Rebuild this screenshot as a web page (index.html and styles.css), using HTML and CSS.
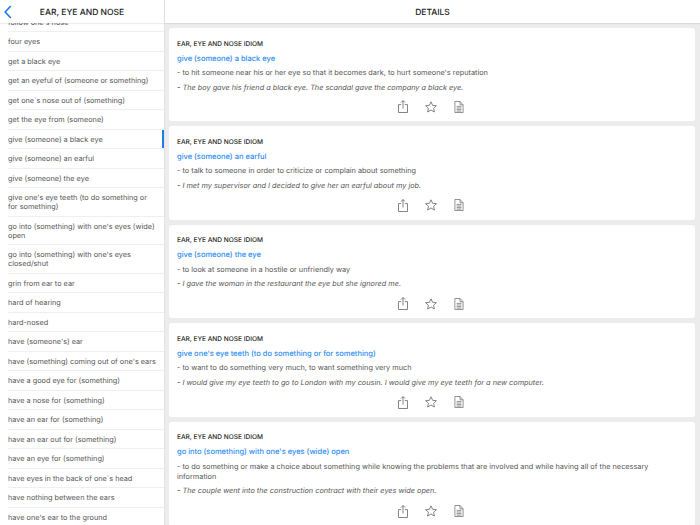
FILE: index.html
```html
<!DOCTYPE html>
<html lang="en">
<head>
<meta charset="utf-8">
<title>Ear, Eye and Nose</title>
<link rel="stylesheet" href="styles.css">
</head>
<body>
<svg class="defs" width="0" height="0">
<defs>
<symbol id="share" viewBox="0 0 10 13"><path d="M3.2 4.6H.5V12.5H9.5V4.6H6.8M5 8.6V.6M3 2.5L5 .5 7 2.5" fill="none" stroke="currentColor" stroke-width=".8"/></symbol>
<symbol id="star" viewBox="0 0 12 12"><path d="M6 .8L7.6 4.3 11.4 4.7 8.6 7.2 9.4 11 6 9 2.6 11 3.4 7.2 .6 4.7 4.4 4.3Z" fill="none" stroke="currentColor" stroke-width=".8" stroke-linejoin="round"/></symbol>
<symbol id="doc" viewBox="0 0 10 12"><path d="M.9 .5H6L9.1 3.8V11.5H.9ZM6 .5V3.8H9.1M2.6 5.4H7.4M2.6 7H7.4M2.6 8.6H7.4M2.6 10.1H7.4" fill="none" stroke="currentColor" stroke-width=".7"/></symbol>
</defs>
</svg>
<div class="app">
  <aside class="sidebar">
    <header class="bar bar-left">
      <svg class="back" viewBox="0 0 8 14" width="8" height="14"><path d="M6.8 1L1.2 7l5.6 6" fill="none" stroke="currentColor" stroke-width="1.7"/></svg>
      <span class="bar-title">EAR, EYE AND NOSE</span>
    </header>
    <ul class="list">
      <li class="row">follow one's nose</li>
      <li class="row">four eyes</li>
      <li class="row">get a black eye</li>
      <li class="row">get an eyeful of (someone or something)</li>
      <li class="row">get one`s nose out of (something)</li>
      <li class="row">get the eye from (someone)</li>
      <li class="row active">give (someone) a black eye</li>
      <li class="row">give (someone) an earful</li>
      <li class="row">give (someone) the eye</li>
      <li class="row">give one's eye teeth (to do something or for something)</li>
      <li class="row">go into (something) with one's eyes (wide) open</li>
      <li class="row">go into (something) with one's eyes closed/shut</li>
      <li class="row">grin from ear to ear</li>
      <li class="row">hard of hearing</li>
      <li class="row">hard-nosed</li>
      <li class="row">have (someone's) ear</li>
      <li class="row">have (something) coming out of one's ears</li>
      <li class="row">have a good eye for (something)</li>
      <li class="row">have a nose for (something)</li>
      <li class="row">have an ear for (something)</li>
      <li class="row">have an ear out for (something)</li>
      <li class="row">have an eye for (something)</li>
      <li class="row">have eyes in the back of one`s head</li>
      <li class="row">have nothing between the ears</li>
      <li class="row">have one's ear to the ground</li>
    </ul>
  </aside>
  <main class="details">
    <header class="bar"><span class="bar-title">DETAILS</span></header>
    <div class="cards">
      <article class="card">
        <h2 class="cat">EAR, EYE AND NOSE IDIOM</h2>
        <h3 class="idiom">give (someone) a black eye</h3>
        <p class="def">- to hit someone near his or her eye so that it becomes dark, to hurt someone's reputation</p>
        <p class="ex">- The boy gave his friend a black eye. The scandal gave the company a black eye.</p>
        <div class="actions"><svg class="i-share"><use href="#share"/></svg><svg class="i-star"><use href="#star"/></svg><svg class="i-doc"><use href="#doc"/></svg></div>
      </article>
      <article class="card">
        <h2 class="cat">EAR, EYE AND NOSE IDIOM</h2>
        <h3 class="idiom">give (someone) an earful</h3>
        <p class="def">- to talk to someone in order to criticize or complain about something</p>
        <p class="ex">- I met my supervisor and I decided to give her an earful about my job.</p>
        <div class="actions"><svg class="i-share"><use href="#share"/></svg><svg class="i-star"><use href="#star"/></svg><svg class="i-doc"><use href="#doc"/></svg></div>
      </article>
      <article class="card">
        <h2 class="cat">EAR, EYE AND NOSE IDIOM</h2>
        <h3 class="idiom">give (someone) the eye</h3>
        <p class="def">- to look at someone in a hostile or unfriendly way</p>
        <p class="ex">- I gave the woman in the restaurant the eye but she ignored me.</p>
        <div class="actions"><svg class="i-share"><use href="#share"/></svg><svg class="i-star"><use href="#star"/></svg><svg class="i-doc"><use href="#doc"/></svg></div>
      </article>
      <article class="card">
        <h2 class="cat">EAR, EYE AND NOSE IDIOM</h2>
        <h3 class="idiom">give one's eye teeth (to do something or for something)</h3>
        <p class="def">- to want to do something very much, to want something very much</p>
        <p class="ex">- I would give my eye teeth to go to London with my cousin. I would give my eye teeth for a new computer.</p>
        <div class="actions"><svg class="i-share"><use href="#share"/></svg><svg class="i-star"><use href="#star"/></svg><svg class="i-doc"><use href="#doc"/></svg></div>
      </article>
      <article class="card">
        <h2 class="cat">EAR, EYE AND NOSE IDIOM</h2>
        <h3 class="idiom">go into (something) with one's eyes (wide) open</h3>
        <p class="def">- to do something or make a choice about something while knowing the problems that are involved and while having all of the necessary information</p>
        <p class="ex">- The couple went into the construction contract with their eyes wide open.</p>
        <div class="actions"><svg class="i-share"><use href="#share"/></svg><svg class="i-star"><use href="#star"/></svg><svg class="i-doc"><use href="#doc"/></svg></div>
      </article>
    </div>
  </main>
</div>
</body>
</html>
```
FILE: styles.css
```css
* { box-sizing: border-box; }
html, body { margin: 0; height: 100%; }
body { font-family: Inter, "Liberation Sans", sans-serif; color: #333; background: #fff; overflow: hidden; text-rendering: geometricPrecision; }
.defs { position: absolute; }
.app { display: flex; width: 700px; height: 525px; overflow: hidden; }
.sidebar { width: 165px; flex: none; border-right: 1px solid #e2e2e2; display: flex; flex-direction: column; overflow: hidden; background: #fff; }
.details { flex: 1; display: flex; flex-direction: column; background: #ececec; min-width: 0; }
.bar { height: 23px; flex: none; background: #fff; display: flex; align-items: center; justify-content: center; padding-top: 2px; box-shadow: 0 1px 1px rgba(0, 0, 0, .07); position: relative; z-index: 1; }
.bar-title { font-size: 8.5px; line-height: 10px; font-weight: 500; color: #222; }
.back { position: absolute; left: 4px; top: 5px; color: #1b7df0; }
.list { list-style: none; margin: -10.25px 0 0; padding: 0 0 0 8px; }
.row { font-size: 7.3px; line-height: 9px; color: #555; padding: 4.75px 6px 4.75px 0; border-bottom: 1px solid #efefef; position: relative; }
.row.active::after { content: ""; position: absolute; right: 0; top: 0; bottom: 0; width: 2px; background: #1b7df0; }
.cards { padding: 5px 5px 0 4px; display: flex; flex-direction: column; gap: 5px; }
.card { background: #fff; border-radius: 3px; padding: 11.5px 8px 0; height: 93.4px; flex: none; display: flex; flex-direction: column; }
.card:last-child { height: 104px; }
.cat { margin: 0; font-size: 6.55px; line-height: 9px; font-weight: 500; color: #222; }
.idiom { margin: 4px 0 0; font-size: 7.5px; line-height: 11px; font-weight: 500; color: #2b8cf2; }
.def { margin: 4.5px 0 0; font-size: 7.33px; line-height: 10px; color: #555; }
.ex { margin: 4.5px 0 0; font-size: 7.32px; line-height: 10px; color: #555; font-style: italic; }
.actions { margin-top: auto; margin-bottom: 8px; margin-right: 3px; display: flex; justify-content: center; align-items: center; gap: 17px; color: #666; }
.i-share { width: 10px; height: 13px; }
.i-star { width: 12px; height: 12px; }
.i-doc { width: 10px; height: 12px; }
```
